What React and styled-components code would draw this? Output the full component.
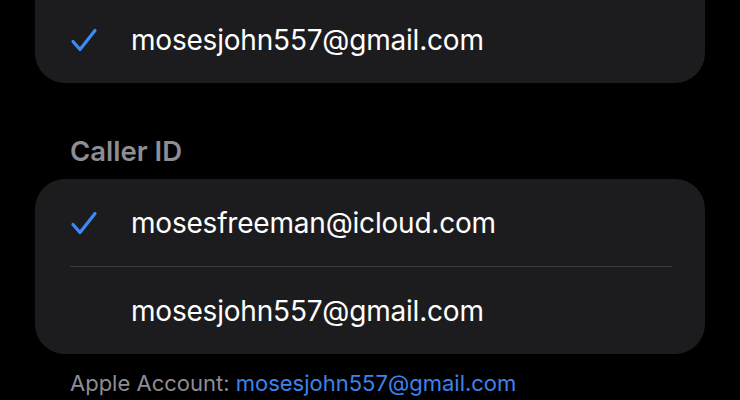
import styled, { createGlobalStyle } from "styled-components";

const Global = createGlobalStyle`
  html, body {
    margin: 0;
    background: #000;
  }
  body {
    font-family: Inter, "Noto Sans", sans-serif;
    -webkit-font-smoothing: antialiased;
  }
`;

const Page = styled.div`
  width: 740px;
  height: 400px;
  overflow: hidden;
  background: #000;
  padding: 0 35px;
  box-sizing: border-box;
`;

const Card = styled.div`
  background: #1c1c1e;
  border-radius: ${(p) => (p.$cutTop ? "0 0 30px 30px" : "30px")};
  margin-top: ${(p) => (p.$cutTop ? "-4px" : "0")};
  padding-left: 35px;
`;

const Row = styled.div`
  display: flex;
  align-items: center;
  height: 87px;
  margin-right: 33px;
  border-top: ${(p) => (p.$divider ? "1px solid #3a3a3c" : "none")};
`;

const CheckSlot = styled.div`
  width: 61px;
  height: 30px;
  display: flex;
  align-items: center;
  color: #3d8af7;
`;

const Email = styled.span`
  color: #fff;
  font-size: 28px;
  letter-spacing: -0.2px;
`;

const Header = styled.div`
  color: #8d8d93;
  font-size: 27.5px;
  font-weight: 600;
  padding: 49px 0 0 35px;
  height: 47px;
  line-height: 38px;
`;

const Footer = styled.div`
  padding: 16px 0 0 35px;
  font-size: 22px;
  color: #8d8d93;
`;

const Link = styled.span`
  color: #3d82ee;
`;

const Check = () => (
  <svg width="28" height="26" viewBox="0 0 28 26" fill="none">
    <path
      d="M3 14.5 L10 22.5 L25 3.5"
      stroke="currentColor"
      strokeWidth="3.2"
      strokeLinecap="round"
      strokeLinejoin="round"
    />
  </svg>
);

const AccountRow = ({ email, checked, divider }) => (
  <Row $divider={divider}>
    <CheckSlot>{checked && <Check />}</CheckSlot>
    <Email>{email}</Email>
  </Row>
);

export default function App() {
  return (
    <>
      <Global />
      <Page>
        <Card $cutTop>
          <AccountRow email="mosesjohn557@gmail.com" checked />
        </Card>
        <Header>Caller ID</Header>
        <Card>
          <AccountRow email="mosesfreeman@icloud.com" checked />
          <AccountRow email="mosesjohn557@gmail.com" divider />
        </Card>
        <Footer>
          Apple Account: <Link>mosesjohn557@gmail.com</Link>
        </Footer>
      </Page>
    </>
  );
}
